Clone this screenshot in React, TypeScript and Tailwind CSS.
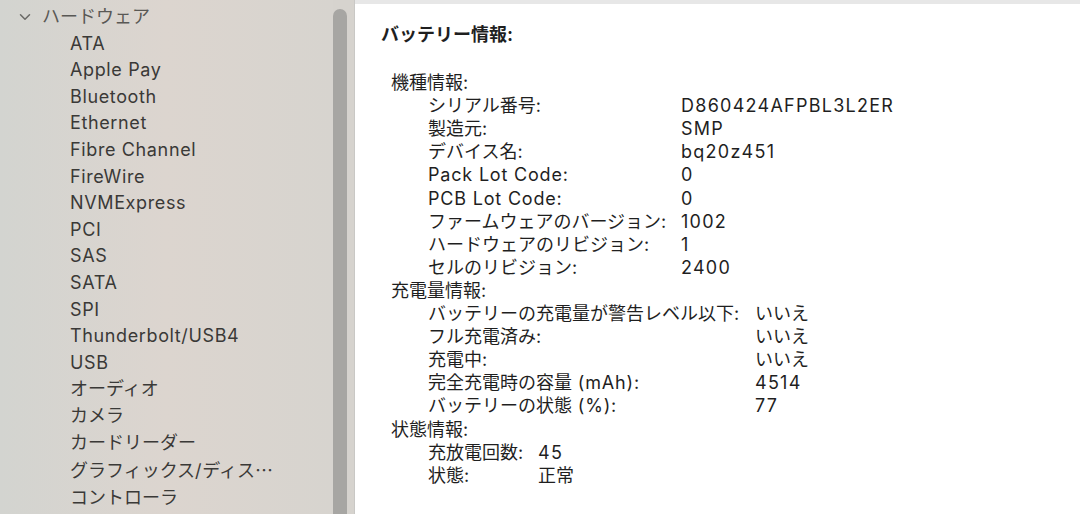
import React from "react";
import { ChevronDown } from "lucide-react";

type Row = { label: string; value: string };

type Group = { title: string; labelWidth: string; rows: Row[] };

const sidebarItems = [
  "ATA",
  "Apple Pay",
  "Bluetooth",
  "Ethernet",
  "Fibre Channel",
  "FireWire",
  "NVMExpress",
  "PCI",
  "SAS",
  "SATA",
  "SPI",
  "Thunderbolt/USB4",
  "USB",
  "オーディオ",
  "カメラ",
  "カードリーダー",
  "グラフィックス/ディス…",
  "コントローラ",
];

const groups: Group[] = [
  {
    title: "機種情報:",
    labelWidth: "w-[253px]",
    rows: [
      { label: "シリアル番号:", value: "D860424AFPBL3L2ER" },
      { label: "製造元:", value: "SMP" },
      { label: "デバイス名:", value: "bq20z451" },
      { label: "Pack Lot Code:", value: "0" },
      { label: "PCB Lot Code:", value: "0" },
      { label: "ファームウェアのバージョン:", value: "1002" },
      { label: "ハードウェアのリビジョン:", value: "1" },
      { label: "セルのリビジョン:", value: "2400" },
    ],
  },
  {
    title: "充電量情報:",
    labelWidth: "w-[327px]",
    rows: [
      { label: "バッテリーの充電量が警告レベル以下:", value: "いいえ" },
      { label: "フル充電済み:", value: "いいえ" },
      { label: "充電中:", value: "いいえ" },
      { label: "完全充電時の容量 (mAh):", value: "4514" },
      { label: "バッテリーの状態 (%):", value: "77" },
    ],
  },
  {
    title: "状態情報:",
    labelWidth: "w-[110px]",
    rows: [
      { label: "充放電回数:", value: "45" },
      { label: "状態:", value: "正常" },
    ],
  },
];

const font = "font-['Inter','Noto_Sans_CJK_JP',sans-serif]";

// 英数字の部分だけ字間を少し広げる (SF の幅に近づける)
const Mixed: React.FC<{ text: string; latin: string }> = ({ text, latin }) => (
  <>
    {text.split(/([A-Za-z0-9/ ().%]+|…)/).map((part, i) => {
      if (part === "…") {
        return (
          <span key={i} className="font-['Noto_Sans_CJK_JP',sans-serif]">
            {part}
          </span>
        );
      }
      return /^[A-Za-z0-9/ ().%]+$/.test(part) ? (
        <span key={i} className={latin}>
          {part}
        </span>
      ) : (
        <React.Fragment key={i}>{part}</React.Fragment>
      );
    })}
  </>
);

const App: React.FC = () => {
  return (
    <div className={`flex h-[514px] w-[1080px] overflow-hidden ${font}`}>
      {/* サイドバー */}
      <div className="w-[333px] shrink-0 bg-gradient-to-r from-[#d3d4d0] via-[#dcd5cf] to-[#d7d4cf] pt-[4px] text-[18px] leading-[26.6px] text-[#3a3937]">
        <div className="flex items-center text-[#595855]">
          <ChevronDown className="ml-[16px] mr-[8px] h-[18px] w-[18px] text-[#6a6966]" strokeWidth={2} />
          <span>ハードウェア</span>
        </div>
        {sidebarItems.map((item) => (
          <div key={item} className="pl-[70px] whitespace-nowrap">
            <Mixed text={item} latin="tracking-[0.035em]" />
          </div>
        ))}
      </div>

      {/* スクロールバー */}
      <div className="flex w-[21px] shrink-0 bg-[#d6d3ce]">
        <div className="mt-[9px] h-full w-[14px] rounded-t-full bg-[#a7a6a3]" />
      </div>

      {/* 詳細 */}
      <div className="flex-1 border-l border-[#c9c8c5] bg-white">
        <div className="h-[4px] bg-[#e7e7e7]" />
        <div className="pl-[26px] pt-[19px] text-[18px] leading-[23.1px] text-[#1f1f1f]">
          <div className="font-bold">バッテリー情報:</div>
          <div className="mt-[25px] pl-[10px]">
            {groups.map((group) => (
              <div key={group.title}>
                <div>{group.title}</div>
                {group.rows.map((row) => (
                  <div key={row.label} className="flex pl-[37px] whitespace-nowrap">
                    <div className={`${group.labelWidth} shrink-0`}>
                      <Mixed text={row.label} latin="tracking-[0.045em]" />
                    </div>
                    <div>
                      <Mixed text={row.value} latin="tracking-[0.07em]" />
                    </div>
                  </div>
                ))}
              </div>
            ))}
          </div>
        </div>
      </div>
    </div>
  );
};

export default App;
